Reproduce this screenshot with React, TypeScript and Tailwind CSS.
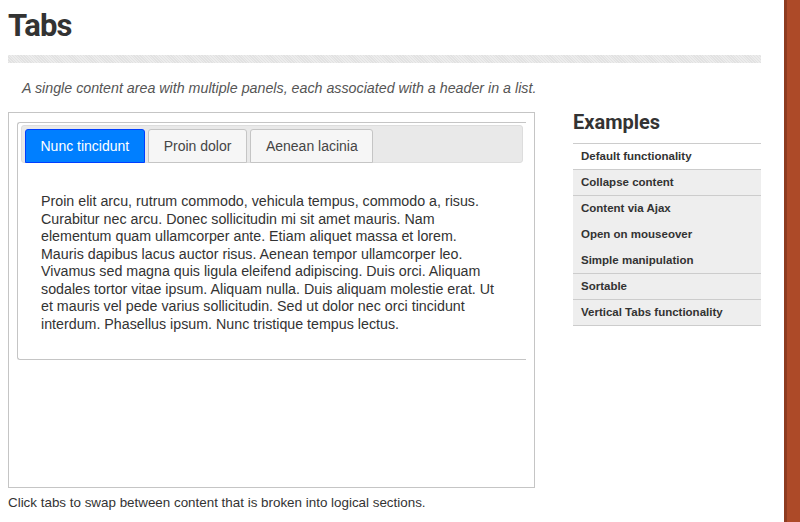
import React from 'react';

const tabs = ['Nunc tincidunt', 'Proin dolor', 'Aenean lacinia'];

const examples = [
  { label: 'Default functionality', active: true, border: true },
  { label: 'Collapse content', border: true },
  { label: 'Content via Ajax', border: false },
  { label: 'Open on mouseover', border: false },
  { label: 'Simple manipulation', border: true },
  { label: 'Sortable', border: true },
  { label: 'Vertical Tabs functionality', border: true },
];

export default function App() {
  return (
    <div className="flex h-[522px] w-[800px] bg-white text-[#333] font-['Liberation_Sans',Arial,sans-serif] overflow-hidden">
      <div className="flex-1 pl-[8px]">
        <div className="w-[753px]">
          {/* Title */}
          <h1 className="pt-[6px] h-[55px] text-[31px] leading-[40px] font-bold tracking-[-0.8px] text-[#333] font-[Roboto,sans-serif]">
            Tabs
          </h1>
          <div className="h-[8px] bg-[repeating-linear-gradient(45deg,#e2e2e2_0px,#e2e2e2_1px,#ececec_1px,#ececec_2px)]" />

          <div className="flex">
            {/* Main column */}
            <div className="w-[527px]">
              <p className="pl-[14px] pt-[16px] h-[49px] whitespace-nowrap text-[14.25px] leading-[18px] italic text-[#555]">
                A single content area with multiple panels, each associated with a header in a list.
              </p>

              <div className="h-[376px] border border-[#c5c5c5] pt-[9px] pl-[8px]">
                <div className="w-[509px] border border-r-0 border-[#c5c5c5] rounded-l-[3px] pl-[3px] pr-[3px] pt-[2px] pb-[3px]">
                  <div className="flex gap-[3.5px] h-[38px] pt-[3px] pl-[3px] border border-[#dddddd] bg-[#e9e9e9] rounded-[3px]">
                    {tabs.map((t, i) => (
                      <div
                        key={t}
                        className={
                          i === 0
                            ? 'h-[34px] px-[14.5px] pt-[7px] text-[14px] leading-[18px] border border-[#003eff] bg-[#007fff] text-white rounded-t-[3px] mb-[-1px]'
                            : 'h-[34px] px-[14.5px] pt-[7px] text-[14px] leading-[18px] border border-[#c5c5c5] bg-[#f6f6f6] text-[#454545] rounded-t-[3px] mb-[-1px]'
                        }
                      >
                        {t}
                      </div>
                    ))}
                  </div>
                  <div className="pl-[20px] pr-[24px] pt-[30px] pb-[23px]">
                    <p className="text-[14.25px] leading-[17.5px] text-[#333]">
                      Proin elit arcu, rutrum commodo, vehicula tempus, commodo a, risus. Curabitur nec arcu. Donec sollicitudin mi sit amet mauris. Nam elementum quam ullamcorper ante. Etiam aliquet massa et lorem. Mauris dapibus lacus auctor risus. Aenean tempor ullamcorper leo. Vivamus sed magna quis ligula eleifend adipiscing. Duis orci. Aliquam sodales tortor vitae ipsum. Aliquam nulla. Duis aliquam molestie erat. Ut et mauris vel pede varius sollicitudin. Sed ut dolor nec orci tincidunt interdum. Phasellus ipsum. Nunc tristique tempus lectus.
                    </p>
                  </div>
                </div>
              </div>

              <p className="pt-[7px] text-[13.4px] leading-[16px] text-[#333]">
                Click tabs to swap between content that is broken into logical sections.
              </p>
            </div>

            {/* Sidebar */}
            <div className="ml-auto w-[188px]">
              <h2 className="pt-[46px] h-[80px] text-[20px] leading-[26px] font-bold text-[#333] font-[Roboto,sans-serif]">
                Examples
              </h2>
              <ul className="border-t border-[#cccccc]">
                {examples.map((e) => (
                  <li
                    key={e.label}
                    className={`h-[26px] pl-[8px] flex items-center text-[11.5px] font-bold text-[#333] ${e.active ? 'bg-white' : 'bg-[#eeeeee]'} ${e.border ? 'border-b border-[#cccccc]' : ''}`}
                  >
                    {e.label}
                  </li>
                ))}
              </ul>
            </div>
          </div>
        </div>
      </div>

      {/* Right accent bar */}
      <div className="w-[16px] h-full flex">
        <div className="w-[3px] bg-[#8e3b20]" />
        <div className="flex-1 bg-[#ad4a28]" />
      </div>
    </div>
  );
}
